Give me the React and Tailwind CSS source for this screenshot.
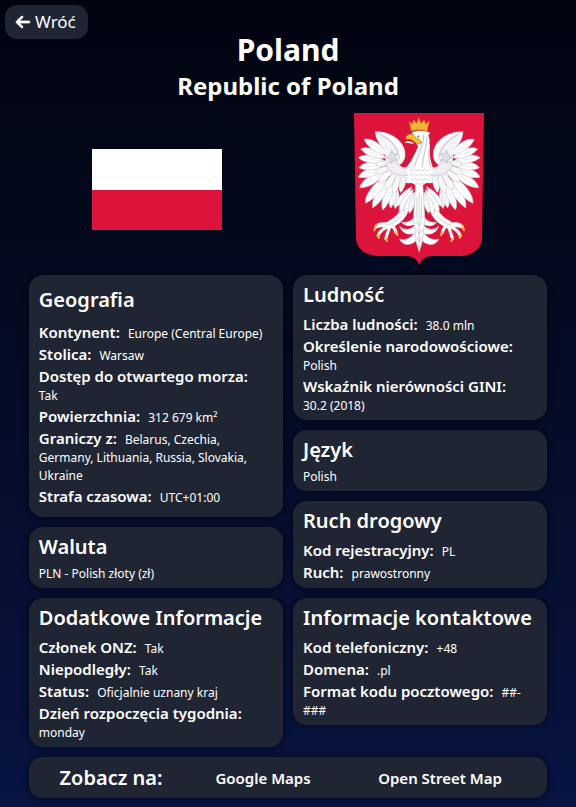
import { FaArrowLeft } from "react-icons/fa6";

// Each feather: root x, root y, tip x, tip y, width
const WING_FEATHERS = [
  [172, 250, 166, 310, 20],
  [166, 240, 152, 308, 24],
  [158, 228, 128, 314, 28],
  [150, 218, 98, 308, 32],
  [142, 210, 76, 294, 33],
  [135, 200, 59, 248, 32],
  [132, 188, 55, 216, 31],
  [132, 178, 57, 188, 30],
  [134, 168, 55, 158, 29],
  [138, 158, 62, 132, 29],
  [144, 150, 72, 103, 31],
  [156, 144, 106, 80, 34],
];

const INNER_FEATHERS = [
  [192, 208, 182, 262, 22],
  [178, 206, 160, 266, 24],
  [166, 202, 136, 254, 24],
  [156, 194, 116, 232, 24],
  [150, 184, 106, 206, 22],
  [150, 172, 108, 180, 20],
];

const LEG_FEATHERS = [
  [214, 246, 168, 304, 26],
  [218, 254, 178, 322, 28],
  [222, 262, 194, 328, 26],
  [226, 262, 208, 324, 20],
];

function featherPath([x1, y1, x2, y2, w]) {
  const dx = x2 - x1;
  const dy = y2 - y1;
  const len = Math.hypot(dx, dy);
  const nx = (-dy / len) * w * 0.5;
  const ny = (dx / len) * w * 0.5;
  return `M${x1} ${y1} C${x1 + dx * 0.3 + nx} ${y1 + dy * 0.3 + ny} ${x1 + dx * 0.8 + nx * 1.2} ${y1 + dy * 0.8 + ny * 1.2} ${x2} ${y2} C${x1 + dx * 0.7 - nx} ${y1 + dy * 0.7 - ny} ${x1 + dx * 0.3 - nx} ${y1 + dy * 0.3 - ny} ${x1} ${y1}Z`;
}

function Feathers({ items }) {
  return items.map((f) => (
    <g key={f.join()}>
      <path d={featherPath(f)} fill="#fff" stroke="#c9c7d3" strokeWidth="2" />
      <path d={`M${f[0]} ${f[1]}L${f[0] + (f[2] - f[0]) * 0.75} ${f[1] + (f[3] - f[1]) * 0.75}`} stroke="#e6e5ec" strokeWidth="2" />
    </g>
  ));
}

function EagleHalf() {
  return (
    <g strokeLinejoin="round" strokeLinecap="round">
      <Feathers items={WING_FEATHERS} />
      <path d="M106 80 C145 78 188 102 194 140 C197 158 190 174 178 180 C190 190 206 188 218 188 L222 232 C200 238 174 230 158 218 C140 206 134 188 136 166 C138 144 130 110 106 80Z" fill="#f4f3f7" />
      <Feathers items={INNER_FEATHERS} />
      <path d="M108 81 C145 78 188 102 194 140 C197 158 190 172 179 176 C168 172 172 164 178 158 C178 130 150 96 108 81Z" fill="#fff" stroke="#c4c2cf" strokeWidth="2" />
      <path d="M122 90 C150 104 172 128 176 156" fill="none" stroke="#d0ced9" strokeWidth="3" />
      <path d="M138 178 C146 206 178 216 214 208 L216 188 C196 192 184 188 174 178 C164 168 150 164 138 178Z" fill="#efeef3" stroke="#c2c0cd" strokeWidth="2" />
      <path d="M155 136 l5 11 12 -2 -7 11 8 10 -13 -1 -7 10 -3 -13 -12 -4 11 -7Z" fill="#e0dfe7" stroke="#b8b6c4" strokeWidth="2" />
      <path d="M186 318 C176 334 164 344 148 352 M196 324 C184 344 168 356 150 362" fill="none" stroke="#fff" strokeWidth="12" />
      <path d="M150 358 C134 366 122 356 109 365 M148 360 C132 372 120 374 114 391 M152 362 C142 376 142 388 137 400 M154 360 C162 366 166 374 168 382 M146 356 C134 356 126 354 114 358" fill="none" stroke="#fff" strokeWidth="9" />
      <path d="M180 334 C168 348 160 354 146 358 M134 372 l-8 6 M144 374 l-4 8" fill="none" stroke="#c0becb" strokeWidth="2" />
      <path d="M107 361 l-4 14 M113 388 l3 10 M136 399 l5 8 M167 380 l5 9" fill="none" stroke="#f0c13c" strokeWidth="6" />
      <Feathers items={LEG_FEATHERS} />
      <path d="M236 348 C222 364 196 368 184 350 C202 354 216 346 226 330Z M236 374 C222 394 188 392 178 362 C194 378 216 374 228 354Z M236 394 C222 424 186 424 178 400 C198 408 216 396 228 374Z" fill="#fff" stroke="#c5c3cf" strokeWidth="1" />
    </g>
  );
}

function CoatOfArms() {
  return (
    <svg viewBox="42 24 389 456" className="w-full" role="img" aria-label="Herb">
      <path d="M42 24H431L425 396C425 430 398 452 356 452H274C256 454 242 462 237 480C232 462 218 454 200 452H118C76 452 48 430 48 396Z" fill="#dc143c" />
      <EagleHalf />
      <g transform="translate(474 0) scale(-1 1)">
        <EagleHalf />
      </g>
      <path d="M226 240 H248 L254 340 L246 410 L237 440 L228 410 L220 340Z" fill="#fff" stroke="#c5c3cf" strokeWidth="2" strokeLinejoin="round" />
      <path d="M237 262 V428 M230 274 V340 M244 274 V340 M237 362 L228 346 M237 362 L246 346 M237 386 L228 370 M237 386 L246 370 M237 410 L230 394 M237 410 L244 394" fill="none" stroke="#bdbac8" strokeWidth="2" />
      <path d="M216 82 C230 74 260 76 270 84 L264 92 C271 100 266 110 269 122 C266 142 270 164 278 188 L262 232 L237 246 L212 232 L196 188 C210 176 222 150 234 124 L222 106Z" fill="#fff" />
      <path d="M250 90 C254 120 232 150 224 182 M260 94 C262 124 248 150 246 186 M268 128 C262 150 268 168 272 186" fill="none" stroke="#cfcdd8" strokeWidth="4" />
      <path d="M206 192 q8 10 16 0 q8 10 16 0 q8 10 16 0 q8 10 14 0 M208 206 q8 10 15 0 q8 10 15 0 q8 10 15 0 q8 10 14 0 M212 220 q8 10 14 0 q8 10 14 0 q8 10 14 0 q6 8 10 0 M220 234 q6 8 12 0 q6 8 12 0 q6 8 12 0" fill="none" stroke="#c3c1ce" strokeWidth="2" />
      <path d="M200 92 C208 84 222 86 226 98 C236 102 244 106 244 114 C240 120 230 116 222 110 C212 102 206 100 200 104 C196 100 196 96 200 92Z" fill="#f2bd35" stroke="#a8741b" strokeWidth="2" />
      <path d="M196 110 C206 106 216 110 222 116 L196 113Z" fill="#fff" />
      <circle cx="234" cy="94" r="3" fill="#8b6a2a" />
      <path d="M214 78 L207 50 L217 58 L221 45 L229 56 L236 39 L243 56 L252 45 L256 58 L267 48 L260 79 C246 73 228 73 214 78Z" fill="#f3b536" stroke="#c98d22" strokeWidth="2" strokeLinejoin="round" />
    </svg>
  );
}

function Flag() {
  return (
    <svg viewBox="0 0 130 81" className="w-full" role="img" aria-label="Flaga">
      <path d="M0 0H130V41H0Z" fill="#fff" />
      <path d="M0 41H130V81H0Z" fill="#dc143c" />
    </svg>
  );
}

function Row({ label, children }) {
  return (
    <div className="text-xs leading-[18px]">
      <dt className="mr-[5px] inline text-[15px] leading-[22px] font-semibold">{label}:</dt>{" "}
      <dd className="inline">{children}</dd>
    </div>
  );
}

const cardLook = "rounded-[14px] bg-[#202534] px-[10px] shadow-[0_0_5px_2px_rgba(0,0,0,0.4)]";

function Card({ title, children, roomy }) {
  return (
    <section className={`${cardLook} ${roomy ? "py-[10px]" : "py-[5px]"}`}>
      <h3 className={`text-xl leading-[30px] font-semibold ${roomy ? "mb-[6px]" : "mb-[3px]"}`}>{title}</h3>
      {children}
    </section>
  );
}

export default function App() {
  return (
    <main className="min-h-screen bg-linear-to-b from-[#02050f] to-[#081442] pb-[9px] font-['Noto_Sans',sans-serif] text-white">
      <header className="relative pt-8">
        <button type="button" className="absolute top-[5px] left-[5px] flex h-[34px] items-center gap-1 rounded-[12px] bg-[#202534] pr-3 pl-[10px] text-[17px]">
          <FaArrowLeft aria-hidden="true" strokeWidth="24" stroke="currentColor" className="size-4" />
          Wróć
        </button>
        <h1 className="text-center text-3xl leading-9 font-bold">Poland</h1>
        <h2 className="text-center text-2xl leading-9 font-bold">Republic of Poland</h2>
      </header>

      <div className="mx-auto mt-[9px] grid w-[91%] grid-cols-2 items-center justify-items-center">
        <div className="w-[130px]"><Flag /></div>
        <div className="w-[130px]"><CoatOfArms /></div>
      </div>

      <div className="mx-auto mt-[10px] grid w-[90%] grid-cols-2 items-start gap-[10px]">
        <div className="flex flex-col gap-[10px]">
          <Card title="Geografia" roomy>
            <dl>
              <Row label="Kontynent">Europe (Central Europe)</Row>
              <Row label="Stolica">Warsaw</Row>
              <Row label="Dostęp do otwartego morza">Tak</Row>
              <Row label="Powierzchnia">312 679 km²</Row>
              <Row label="Graniczy z">Belarus, Czechia, Germany, Lithuania, Russia, Slovakia, Ukraine</Row>
              <Row label="Strafa czasowa">UTC+01:00</Row>
            </dl>
          </Card>
          <Card title="Waluta">
            <p className="text-xs leading-[18px]">PLN - Polish złoty (zł)</p>
          </Card>
          <Card title="Dodatkowe Informacje">
            <dl>
              <Row label="Członek ONZ">Tak</Row>
              <Row label="Niepodległy">Tak</Row>
              <Row label="Status">Oficjalnie uznany kraj</Row>
              <Row label="Dzień rozpoczęcia tygodnia">monday</Row>
            </dl>
          </Card>
        </div>
        <div className="flex flex-col gap-[10px]">
          <Card title="Ludność">
            <dl>
              <Row label="Liczba ludności">38.0 mln</Row>
              <Row label="Określenie narodowościowe">Polish</Row>
              <Row label="Wskaźnik nierówności GINI">30.2 (2018)</Row>
            </dl>
          </Card>
          <Card title="Język">
            <p className="text-xs leading-[18px]">Polish</p>
          </Card>
          <Card title="Ruch drogowy">
            <dl>
              <Row label="Kod rejestracyjny">PL</Row>
              <Row label="Ruch">prawostronny</Row>
            </dl>
          </Card>
          <Card title="Informacje kontaktowe">
            <dl>
              <Row label="Kod telefoniczny">+48</Row>
              <Row label="Domena">.pl</Row>
              <Row label="Format kodu pocztowego">##-###</Row>
            </dl>
          </Card>
        </div>
        <section className={`${cardLook} col-span-2 grid h-[41px] grid-cols-[29fr_32fr_39fr] items-center text-center`}>
          <h3 className="text-xl font-semibold">Zobacz na:</h3>
          <a href="#google-maps" className="text-[15px] font-semibold">Google Maps</a>
          <a href="#open-street-map" className="text-[15px] font-semibold">Open Street Map</a>
        </section>
      </div>
    </main>
  );
}
